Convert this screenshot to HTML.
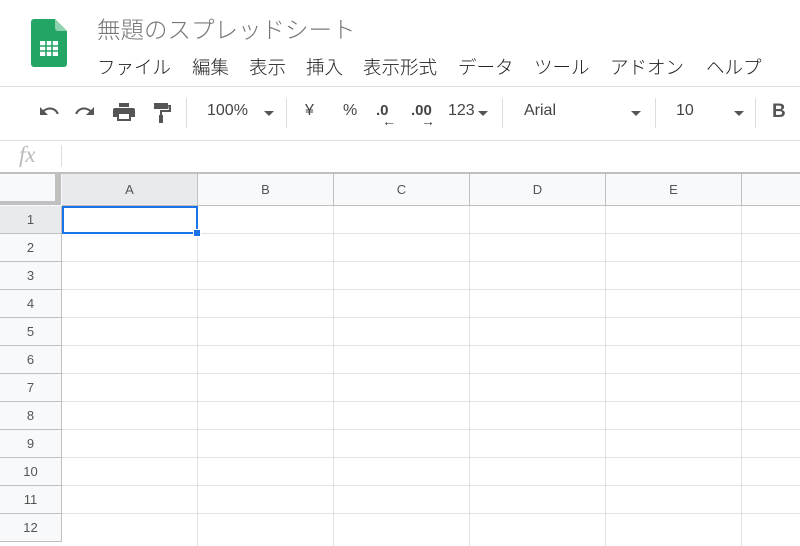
<!DOCTYPE html>
<html><head><meta charset="utf-8"><style>
*{margin:0;padding:0;box-sizing:border-box}
body{width:800px;height:541px;overflow:hidden;background:#fff;font-family:"Liberation Sans","Noto Sans CJK JP",sans-serif;position:relative;color:#444}
.a{position:absolute}
.title{left:97px;top:11px;font-size:23.5px;color:#777;font-weight:300}
.menu{top:54px;font-size:18.5px;color:#222;font-weight:300}
.tb{top:102px;font-size:16px;color:#444}
.sep{top:98px;width:1px;height:30px;background:#ddd}
.hl{height:1px;left:0;width:800px;background:#e0e0e0}
.colh{top:174px;height:32px;background:#f8f9fa;border-right:1px solid #c0c0c0;border-bottom:1px solid #c0c0c0;font-size:13px;color:#555;text-align:center;line-height:31px}
.rowh{left:0;width:62px;height:28px;background:#f8f9fa;border-right:1px solid #c0c0c0;border-bottom:1px solid #c0c0c0;font-size:13px;color:#555;text-align:center;line-height:27px}
.gh{left:62px;width:738px;height:1px;background:#e2e2e2}
.gv{top:206px;width:1px;height:340px;background:#e2e2e2}
.caret{width:0;height:0;border-left:5px solid transparent;border-right:5px solid transparent;border-top:5px solid #555}
</style></head><body>
<svg class="a" style="left:31px;top:19px" width="36" height="48" viewBox="0 0 36 48"><path d="M3 0h21l12 12v33a3 3 0 0 1-3 3H3a3 3 0 0 1-3-3V3a3 3 0 0 1 3-3z" fill="#23a566"/><path d="M24 0l12 12H27a3 3 0 0 1-3-3z" fill="#8ed1b1"/><path d="M9 22h18v15H9z" fill="#fff"/><path d="M9 27h18M9 32h18M15 22v15M21 22v15" stroke="#23a566" stroke-width="1.6"/></svg>
<div class="a title">無題のスプレッドシート</div>
<div class="a menu" style="left:97px">ファイル</div>
<div class="a menu" style="left:192px">編集</div>
<div class="a menu" style="left:249px">表示</div>
<div class="a menu" style="left:306px">挿入</div>
<div class="a menu" style="left:363px">表示形式</div>
<div class="a menu" style="left:458px">データ</div>
<div class="a menu" style="left:534px">ツール</div>
<div class="a menu" style="left:610px">アドオン</div>
<div class="a menu" style="left:706px">ヘルプ</div>
<div class="a hl" style="top:86px"></div>
<svg class="a" style="left:37px;top:104px" width="22" height="14" viewBox="0 0 22 14"><path d="M3 3v8h8L7.5 7.5C9 6.3 11 5.5 13 5.5c3.2 0 5.8 2 6.8 4.8l2-.7C20.5 5.9 17 3.5 13 3.5c-2.6 0-5 1-6.9 2.6z" fill="#555"/></svg>
<svg class="a" style="left:75px;top:104px" width="22" height="14" viewBox="0 0 22 14"><g transform="translate(22,0) scale(-1,1)"><path d="M3 3v8h8L7.5 7.5C9 6.3 11 5.5 13 5.5c3.2 0 5.8 2 6.8 4.8l2-.7C20.5 5.9 17 3.5 13 3.5c-2.6 0-5 1-6.9 2.6z" fill="#555"/></g></svg>
<svg class="a" style="left:113px;top:102px" width="22" height="20" viewBox="0 0 22 20"><path d="M6 1h10v4H6z M2 6h18a2 2 0 0 1 2 2v7h-4v4H4v-4H0V8a2 2 0 0 1 2-2z" fill="#555"/><path d="M6 12h10v5H6z" fill="#fff"/></svg>
<svg class="a" style="left:153px;top:102px" width="20" height="22" viewBox="0 0 20 22"><path d="M1 1h14v6H1z M15 3h3v7H9v3H7V8h9z M6 13h4v8H6z" fill="#555"/></svg>
<div class="a sep" style="left:186px"></div>
<div class="a tb" style="left:207px">100%</div>
<div class="a caret" style="left:264px;top:111px"></div>
<div class="a sep" style="left:286px"></div>
<div class="a tb" style="left:305px">¥</div>
<div class="a tb" style="left:343px">%</div>
<div class="a tb" style="left:376px;font-weight:bold;font-size:15px">.0</div>
<div class="a tb" style="left:382px;top:113px;font-size:14px;font-weight:bold">←</div>
<div class="a tb" style="left:411px;font-weight:bold;font-size:15px">.00</div>
<div class="a tb" style="left:421px;top:113px;font-size:14px;font-weight:bold">→</div>
<div class="a tb" style="left:448px">123</div>
<div class="a caret" style="left:478px;top:111px"></div>
<div class="a sep" style="left:502px"></div>
<div class="a tb" style="left:524px">Arial</div>
<div class="a caret" style="left:631px;top:111px"></div>
<div class="a sep" style="left:655px"></div>
<div class="a tb" style="left:676px">10</div>
<div class="a caret" style="left:734px;top:111px"></div>
<div class="a sep" style="left:755px"></div>
<div class="a tb" style="left:772px;font-weight:bold;font-size:19px;top:101px;color:#555">B</div>
<div class="a hl" style="top:140px"></div>
<div class="a" style="left:19px;top:142px;font-family:'Liberation Serif',serif;font-style:italic;font-size:23px;color:#bbb">fx</div>
<div class="a" style="left:61px;top:145px;width:1px;height:22px;background:#ddd"></div>
<div class="a" style="left:0;top:172px;width:800px;height:2px;background:#c0c0c0"></div>
<div class="a" style="left:0;top:174px;width:62px;height:32px;background:#f8f9fa"></div>
<div class="a" style="left:55px;top:174px;width:6px;height:31px;background:#c0c0c0"></div>
<div class="a" style="left:0;top:201px;width:61px;height:4px;background:#c0c0c0"></div>
<div class="a colh" style="left:62px;width:136px;background:#e8eaed">A</div>
<div class="a colh" style="left:198px;width:136px">B</div>
<div class="a colh" style="left:334px;width:136px">C</div>
<div class="a colh" style="left:470px;width:136px">D</div>
<div class="a colh" style="left:606px;width:136px">E</div>
<div class="a colh" style="left:742px;width:60px"></div>
<div class="a rowh" style="top:206px;background:#e8eaed">1</div>
<div class="a rowh" style="top:234px">2</div>
<div class="a rowh" style="top:262px">3</div>
<div class="a rowh" style="top:290px">4</div>
<div class="a rowh" style="top:318px">5</div>
<div class="a rowh" style="top:346px">6</div>
<div class="a rowh" style="top:374px">7</div>
<div class="a rowh" style="top:402px">8</div>
<div class="a rowh" style="top:430px">9</div>
<div class="a rowh" style="top:458px">10</div>
<div class="a rowh" style="top:486px">11</div>
<div class="a rowh" style="top:514px">12</div>
<div class="a gh" style="top:233px"></div><div class="a gh" style="top:261px"></div><div class="a gh" style="top:289px"></div><div class="a gh" style="top:317px"></div><div class="a gh" style="top:345px"></div><div class="a gh" style="top:373px"></div><div class="a gh" style="top:401px"></div><div class="a gh" style="top:429px"></div><div class="a gh" style="top:457px"></div><div class="a gh" style="top:485px"></div><div class="a gh" style="top:513px"></div>
<div class="a gv" style="left:197px"></div><div class="a gv" style="left:333px"></div><div class="a gv" style="left:469px"></div><div class="a gv" style="left:605px"></div><div class="a gv" style="left:741px"></div>
<div class="a" style="left:62px;top:206px;width:136px;height:28px;border:2px solid #1a73e8"></div>
<div class="a" style="left:193px;top:229px;width:8px;height:8px;background:#1a73e8;border:1px solid #fff"></div>
</body></html>
